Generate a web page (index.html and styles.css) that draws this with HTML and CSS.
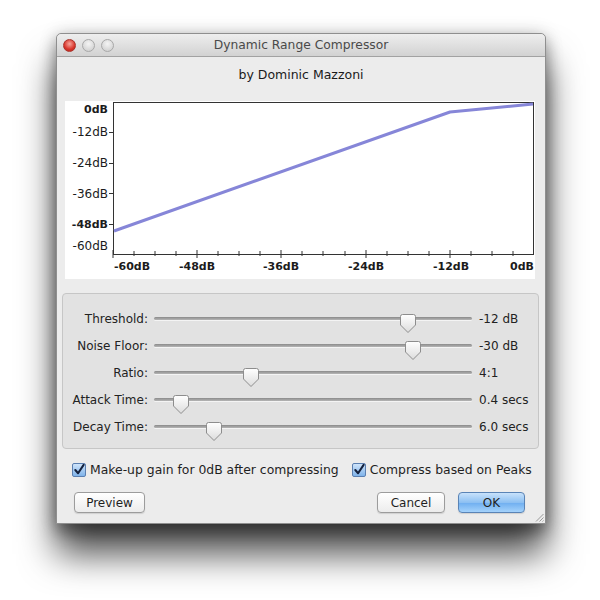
FILE: index.html
```html
<!DOCTYPE html>
<html lang="en">
<head>
    <meta charset="UTF-8">
    <title>Dynamic Range Compressor</title>
    <link rel="stylesheet" href="styles.css">
</head>
<body>
    <svg class="defs" width="0" height="0">
        <defs>
            <linearGradient id="thumbFill" x1="0" y1="0" x2="0" y2="1">
                <stop offset="0" stop-color="#ffffff"/>
                <stop offset="1" stop-color="#dcdcdc"/>
            </linearGradient>
            <symbol id="thumb" viewBox="0 0 16 19">
                <path d="M2.5 0.5 H13.5 Q15.5 0.5 15.5 2.5 V11 L8 18.5 L0.5 11 V2.5 Q0.5 0.5 2.5 0.5 Z" fill="url(#thumbFill)" stroke="#8d8d8d"/>
            </symbol>
            <symbol id="tick" viewBox="0 0 13 13">
                <path d="M2.5 6.5 L5.5 10 L11.5 1" fill="none" stroke="#14213d" stroke-width="2.2" stroke-linecap="round" stroke-linejoin="round"/>
            </symbol>
        </defs>
    </svg>

    <div class="window">
        <div class="titlebar">
            <div class="lights">
                <span class="light close"></span>
                <span class="light"></span>
                <span class="light"></span>
            </div>
            <div class="title">Dynamic Range Compressor</div>
            <div></div>
        </div>

        <div class="content">
            <div class="byline">by Dominic Mazzoni</div>

            <!-- curva de compresion -->
            <div class="graph">
                <svg width="470" height="178" viewBox="0 0 470 178">
                    <rect x="48.5" y="1.5" width="420" height="152" fill="#fff" stroke="#333"/>
                    <path d="M48 149V157 M69 150V155 M90 150V155 M111 150V155 M132 149V157 M153 150V155 M174 150V155 M195 150V155 M216 149V157 M237 150V155 M258 150V155 M280 150V155 M301 149V157 M322 150V155 M343 150V155 M364 150V155 M385 149V157 M406 150V155 M427 150V155 M448 150V155"
                          stroke="#333" stroke-width="1"/>
                    <path d="M44 31.5H48 M44 62.5H48 M44 92.5H48 M44 123.5H48" stroke="#333" stroke-width="1"/>
                    <polyline points="49,130 385,11 468,3" fill="none" stroke="#8686d8" stroke-width="3" stroke-linejoin="round"/>

                    <g class="ylab">
                        <text x="43" y="12" class="bold">0dB</text>
                        <text x="43" y="35">-12dB</text>
                        <text x="43" y="66">-24dB</text>
                        <text x="43" y="97">-36dB</text>
                        <text x="43" y="127" class="bold">-48dB</text>
                        <text x="43" y="149">-60dB</text>
                    </g>
                    <g class="xlab">
                        <text x="49" y="169" class="first">-60dB</text>
                        <text x="132" y="169">-48dB</text>
                        <text x="216" y="169">-36dB</text>
                        <text x="301" y="169">-24dB</text>
                        <text x="386" y="169">-12dB</text>
                        <text x="469" y="169" class="last">0dB</text>
                    </g>
                </svg>
            </div>

            <div class="params">
                <div class="label">Threshold:</div>
                <div class="track"><svg class="thumb" style="left: 80%"><use href="#thumb"/></svg></div>
                <div class="value">-12 dB</div>

                <div class="label">Noise Floor:</div>
                <div class="track"><svg class="thumb" style="left: 81.5%"><use href="#thumb"/></svg></div>
                <div class="value">-30 dB</div>

                <div class="label">Ratio:</div>
                <div class="track"><svg class="thumb" style="left: 30.5%"><use href="#thumb"/></svg></div>
                <div class="value">4:1</div>

                <div class="label">Attack Time:</div>
                <div class="track"><svg class="thumb" style="left: 8.5%"><use href="#thumb"/></svg></div>
                <div class="value">0.4 secs</div>

                <div class="label">Decay Time:</div>
                <div class="track"><svg class="thumb" style="left: 19%"><use href="#thumb"/></svg></div>
                <div class="value">6.0 secs</div>
            </div>

            <div class="checks">
                <label class="check"><span class="box"><svg><use href="#tick"/></svg></span>Make-up gain for 0dB after compressing</label>
                <label class="check"><span class="box"><svg><use href="#tick"/></svg></span>Compress based on Peaks</label>
            </div>

            <div class="buttons">
                <button class="btn preview">Preview</button>
                <div class="spacer"></div>
                <button class="btn cancel">Cancel</button>
                <button class="btn ok">OK</button>
            </div>
        </div>

        <svg class="grip" width="10" height="10" viewBox="0 0 10 10">
            <path d="M9.5 2 L2 9.5 M9.5 5.5 L5.5 9.5 M9.5 8.5 L8.5 9.5" stroke="#9a9a9a" stroke-width="1"/>
        </svg>
    </div>
</body>
</html>
```

FILE: styles.css
```css
html, body {
    margin: 0;
    padding: 0;
    background: #fff;
}
body {
    min-height: 600px;
    overflow: hidden;
    font-family: "DejaVu Sans", "Lucida Grande", sans-serif;
    font-size: 12px;
    color: #1f1f1f;
}
.defs {
    position: absolute;
    width: 0;
    height: 0;
}
.window {
    position: relative;
    width: 488px;
    margin: 33px 0 0 56px;
    background: #ececec;
    border: 1px solid #8f8f8f;
    border-radius: 5px 5px 0 0;
    box-shadow: 0 30px 36px rgba(0, 0, 0, 0.7), 0 8px 16px rgba(0, 0, 0, 0.35), 0 0 18px rgba(0, 0, 0, 0.15);
}
.titlebar {
    display: grid;
    grid-template-columns: 1fr auto 1fr;
    align-items: center;
    height: 22px;
    border-bottom: 1px solid #a2a2a2;
    border-radius: 5px 5px 0 0;
    background: linear-gradient(#eeeeee, #d2d2d2);
}
.lights {
    display: flex;
    gap: 6px;
    padding-left: 6px;
}
.light {
    width: 11px;
    height: 11px;
    border-radius: 50%;
    border: 1px solid #a8a8a8;
    background: radial-gradient(circle at 50% 35%, #f4f4f4, #c9c9c9);
}
.light.close {
    border-color: #a9332b;
    background: radial-gradient(circle at 50% 35%, #f6a59c, #d9342a 60%, #b0231b);
}
.title {
    font-size: 12.3px;
    color: #4a4a4a;
}
.content {
    padding: 0 0 10px 0;
}
.byline {
    padding-top: 8px;
    line-height: 20px;
    text-align: center;
    font-size: 12.5px;
    color: #1a1a1a;
}
.graph {
    margin: 16px 0 0 8px;
    width: 470px;
    height: 178px;
    background: #fff;
}
.graph svg {
    display: block;
}
.graph text {
    font-family: "DejaVu Sans", sans-serif;
    fill: #1c1c1c;
}
.ylab text {
    font-size: 12px;
    text-anchor: end;
}
.ylab text.bold {
    font-size: 11px;
    font-weight: bold;
}
.xlab text {
    font-size: 11px;
    font-weight: bold;
    text-anchor: middle;
}
.xlab text.first {
    text-anchor: start;
}
.xlab text.last {
    text-anchor: end;
}
.params {
    display: grid;
    grid-template-columns: 85px 322px 1fr;
    grid-auto-rows: 27px;
    column-gap: 4px;
    align-items: center;
    margin: 14px 0 0 5px;
    width: 475px;
    padding: 11px 0 8px 0;
    background: #e2e2e2;
    border: 1px solid #c6c6c6;
    border-radius: 4px;
}
.label {
    text-align: right;
    color: #222;
}
.track {
    position: relative;
    height: 3px;
    margin: 0 2px;
    border-radius: 2px;
    background: linear-gradient(#8a8a8a, #b6b6b6);
    box-shadow: 0 1px 0 #f4f4f4;
}
.thumb {
    position: absolute;
    top: -3px;
    width: 16px;
    height: 19px;
    margin-left: -8px;
}
.value {
    color: #222;
    padding-left: 1px;
}
.checks {
    display: flex;
    gap: 13px;
    margin-top: 13px;
    padding-left: 15px;
    line-height: 16px;
    font-size: 12.4px;
}
.check {
    display: flex;
    align-items: center;
    gap: 4px;
    color: #1f1f1f;
}
.box {
    width: 12px;
    height: 12px;
    border: 1px solid #5b7fb0;
    border-radius: 2px;
    background: linear-gradient(#cfe4fa, #7fb3ea);
}
.box svg {
    display: block;
    width: 12px;
    height: 12px;
}
.buttons {
    display: flex;
    margin-top: 14px;
    padding: 0 20px 0 17px;
}
.spacer {
    flex: 1;
}
.btn {
    height: 21px;
    padding: 0;
    font-family: "DejaVu Sans", "Lucida Grande", sans-serif;
    font-size: 12px;
    color: #1f1f1f;
    border: 1px solid #9c9c9c;
    border-radius: 4px;
    background: linear-gradient(#ffffff, #ececec);
    box-shadow: 0 1px 1px rgba(0, 0, 0, 0.12);
}
.preview {
    width: 71px;
}
.cancel {
    width: 68px;
    margin-right: 13px;
}
.ok {
    width: 67px;
    border-color: #5a84b6;
    background: linear-gradient(#c8e2fb, #8dc0f2 50%, #6eaef0 51%, #a4d2fb);
}
.grip {
    position: absolute;
    right: 1px;
    bottom: 1px;
}
```
